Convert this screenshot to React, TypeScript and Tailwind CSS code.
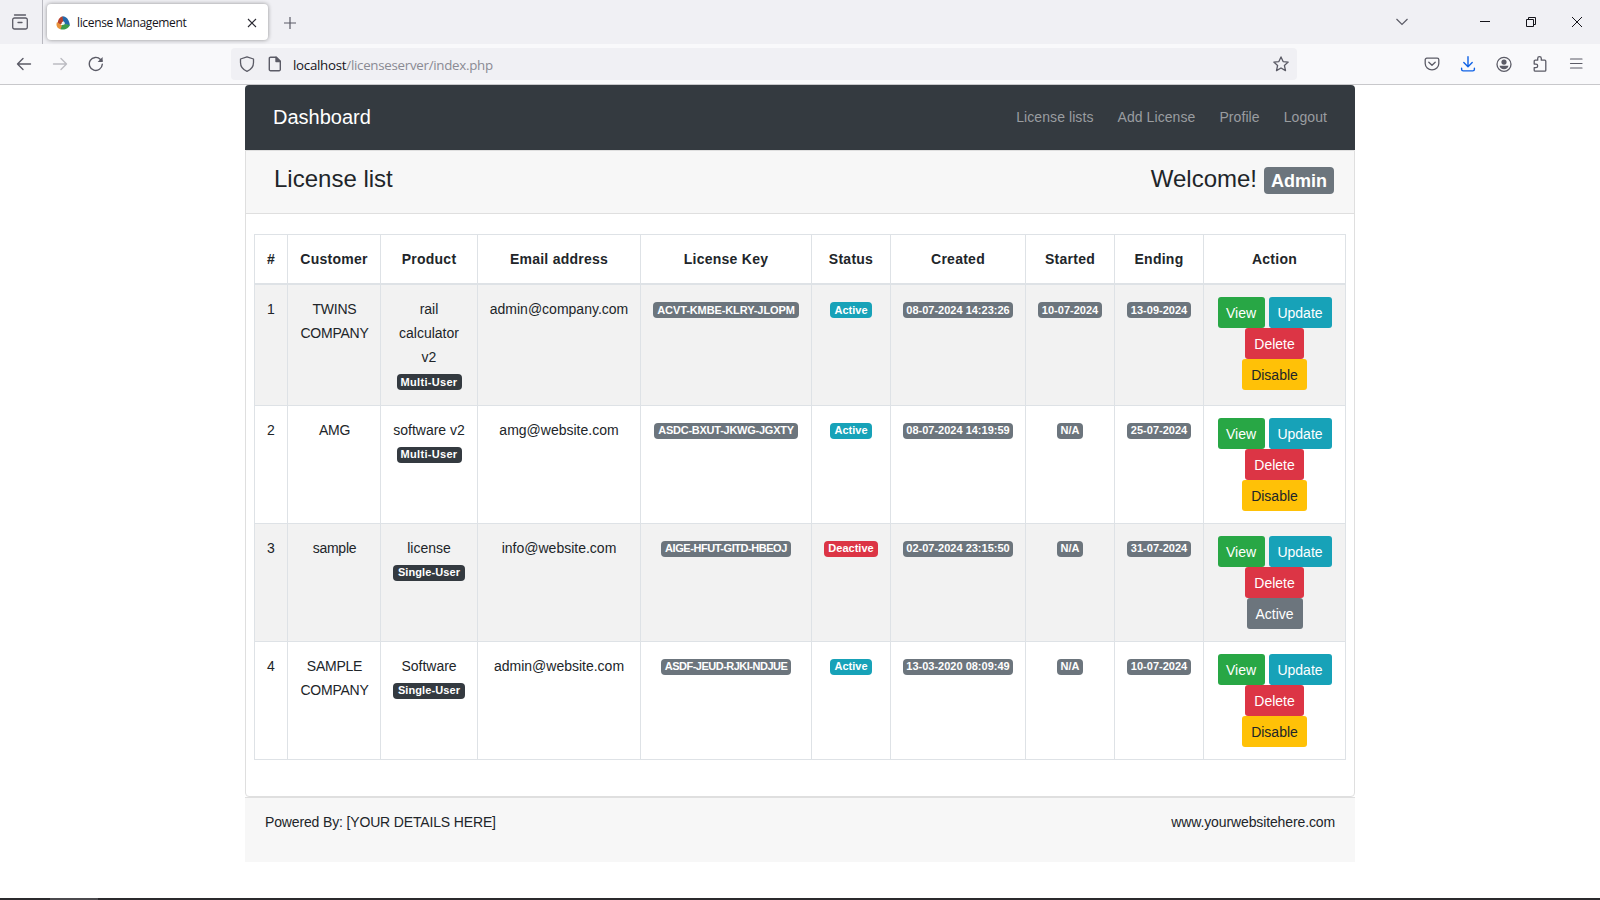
import { Fragment, type ReactNode } from "react";
import clsx from "clsx";

const licenses = [
  {
    id: 1,
    customer: ["TWINS", "COMPANY"],
    product: ["rail", "calculator", "v2"],
    type: "Multi-User",
    email: "admin@company.com",
    key: "ACVT-KMBE-KLRY-JLOPM",
    keyStyle: "w-[146px] tracking-[-0.1px]",
    status: "Active",
    created: "08-07-2024 14:23:26",
    started: "10-07-2024",
    ending: "13-09-2024",
  },
  {
    id: 2,
    customer: ["AMG"],
    product: ["software v2"],
    type: "Multi-User",
    email: "amg@website.com",
    key: "ASDC-BXUT-JKWG-JGXTY",
    keyStyle: "w-[144px] tracking-[-0.25px]",
    status: "Active",
    created: "08-07-2024 14:19:59",
    started: "N/A",
    ending: "25-07-2024",
  },
  {
    id: 3,
    customer: ["sample"],
    product: ["license"],
    type: "Single-User",
    email: "info@website.com",
    key: "AIGE-HFUT-GITD-HBEOJ",
    keyStyle: "w-[130px] tracking-[-0.45px]",
    status: "Deactive",
    created: "02-07-2024 23:15:50",
    started: "N/A",
    ending: "31-07-2024",
  },
  {
    id: 4,
    customer: ["SAMPLE", "COMPANY"],
    product: ["Software"],
    type: "Single-User",
    email: "admin@website.com",
    key: "ASDF-JEUD-RJKI-NDJUE",
    keyStyle: "w-[130px] tracking-[-0.5px]",
    status: "Active",
    created: "13-03-2020 08:09:49",
    started: "N/A",
    ending: "10-07-2024",
  },
];

const columns = [
  { title: "#", width: "w-[33px]" },
  { title: "Customer", width: "w-[93px]" },
  { title: "Product", width: "w-[97px]" },
  { title: "Email address", width: "w-[163px]" },
  { title: "License Key", width: "w-[171px]" },
  { title: "Status", width: "w-[79px]" },
  { title: "Created", width: "w-[135px]" },
  { title: "Started", width: "w-[89px]" },
  { title: "Ending", width: "w-[89px]" },
  { title: "Action", width: "w-[142px]" },
];

function Badge({ className, children }: { className: string; children: ReactNode }) {
  return (
    <span
      className={clsx(
        "inline-flex h-4 items-center justify-center whitespace-nowrap rounded text-[11px] font-bold leading-none text-white",
        className
      )}
    >
      {children}
    </span>
  );
}

function Button({ className, children }: { className: string; children: ReactNode }) {
  return (
    <button className={clsx("h-[31px] rounded-[3px] pt-0.5 text-center text-sm leading-[29px]", className)}>
      {children}
    </button>
  );
}

function Lines({ items }: { items: string[] }) {
  return (
    <>
      {items.map((line) => (
        <Fragment key={line}>
          {line}
          <br />
        </Fragment>
      ))}
    </>
  );
}

function Browser() {
  return (
    <header className="font-['Open_Sans','Noto_Sans',sans-serif] text-[#15141a]">
      <div className="flex h-11 items-center bg-[#f0f0f4]">
        <div className="flex h-11 w-[43px] items-center justify-center border-r border-[#b9b9c0] pr-0.5">
          <svg className="size-4" viewBox="0 0 16 16" fill="none" stroke="#5b5b66" strokeWidth="1.3" strokeLinecap="round">
            <path d="M2.5 1h11M2.500 4h11a1.800 1.800 0 0 1 1.800 1.800v7.400a1.800 1.800 0 0 1-1.800 1.800h-11a1.800 1.800 0 0 1-1.800-1.800V5.800a1.800 1.800 0 0 1 1.800-1.800zM6 8.500h4" />
          </svg>
        </div>
        <div className="ml-1 flex h-9 w-[221px] items-center rounded bg-white pt-px pr-[11px] pl-[9px] shadow-[0_0_4px_rgba(0,0,0,0.4)]">
          <svg className="size-3.5 shrink-0" viewBox="0 0 14 14">
            <path d="M7 6.500 2.500 10C1 8 1.500 2 6.500.3L8 4z" fill="#b8402c" />
            <path d="M6.500.3C10 0 13.500 4 13.800 9.500L9 8.500 7 4.500z" fill="#2369ab" />
            <path d="M13.800 9C13 12.500 8 14.500 4 13L5 9.500l4-1.500z" fill="#3d9c4c" />
            <path d="M1 6C-.3 9 .8 12.500 4.500 13.200L6 9.500z" fill="#e8923a" />
            <circle cx="7.200" cy="7" r="1.500" fill="#eef3f8" />
          </svg>
          <span className="ml-[7px] text-xs tracking-[-0.35px] whitespace-nowrap">license Management</span>
          <svg className="ml-auto size-2.5" viewBox="0 0 10 10" stroke="#2b2a33" strokeWidth="1.1">
            <path d="M1 1l8 8M9 1L1 9" />
          </svg>
        </div>
        <svg className="mt-px ml-4 size-3" viewBox="0 0 12 12" stroke="#5b5b66" strokeWidth="1.200">
          <path d="M6 0v12M0 6h12" />
        </svg>
        <div className="ml-auto flex items-center pr-[18px]">
          <svg className="mr-[72px] h-3 w-3" viewBox="0 0 12 12" fill="none" stroke="#5b5b66" strokeWidth="1.200">
            <path d="M.5 3 6 8.500 11.500 3" />
          </svg>
          <svg className="mr-9 h-2.5 w-2.5" viewBox="0 0 10 10" stroke="#15141a">
            <path d="M0 4.500h10" />
          </svg>
          <svg className="mr-9 h-2.5 w-2.5" viewBox="0 0 10 10" fill="none" stroke="#15141a">
            <path d="M.5 2.500h7v7h-7zM2.500 2.500v-2h7v7h-2" />
          </svg>
          <svg className="h-2.5 w-2.5" viewBox="0 0 10 10" stroke="#15141a">
            <path d="M0 0l10 10M10 0L0 10" />
          </svg>
        </div>
      </div>

      <div className="flex h-[41px] items-start border-b border-[#c8c8cb] bg-[#f9f9fb] pt-1">
        <div className="flex h-8 w-[231px] shrink-0 items-center pl-4">
          <svg className="size-4" viewBox="0 0 16 16" fill="none" stroke="#5b5b66" strokeWidth="1.400" strokeLinecap="round" strokeLinejoin="round">
            <path d="M14.500 8H1.500M7 2.500 1.500 8 7 13.500" />
          </svg>
          <svg className="ml-5 size-4" viewBox="0 0 16 16" fill="none" stroke="#bcbcc2" strokeWidth="1.400" strokeLinecap="round" strokeLinejoin="round">
            <path d="M1.500 8h13M9 2.500 14.500 8 9 13.500" />
          </svg>
          <svg className="ml-5 size-4" viewBox="0 0 16 16" fill="none" stroke="#5b5b66" strokeWidth="1.400" strokeLinecap="round">
            <path d="M14.300 8.300A6.500 6.500 0 1 1 12.500 3.400L14 5" />
            <path d="M14.600 1v5H9.600z" fill="#5b5b66" stroke="none" />
          </svg>
        </div>
        <div className="flex h-8 w-[1066px] shrink-0 items-center rounded bg-[#f0f0f4] px-2">
          <svg className="size-4" viewBox="0 0 16 16" fill="none" stroke="#5b5b66" strokeWidth="1.300" strokeLinejoin="round">
            <path d="M8 .8 14.500 3v3.500c0 4-2.500 7.200-6.500 8.800C4 13.700 1.500 10.500 1.500 6.500V3z" />
          </svg>
          <svg className="ml-3 size-4" viewBox="0 0 16 16" fill="none" stroke="#5b5b66" strokeWidth="1.400" strokeLinejoin="round">
            <path d="M3.500 1.200h5.800l4 4v8.300a1.200 1.200 0 0 1-1.200 1.200H3.500a1.200 1.200 0 0 1-1.200-1.200V2.400a1.200 1.200 0 0 1 1.200-1.200z" />
            <path d="M9 1.200v4.300h4.300z" fill="#5b5b66" />
          </svg>
          <span className="ml-2.5 pt-[3px] text-[13.300px] tracking-[-0.27px] text-[#8a8a93]">
            <span className="text-[#15141a]">localhost</span>/licenseserver/index.php
          </span>
          <svg className="ml-auto size-4" viewBox="0 0 16 16" fill="none" stroke="#5b5b66" strokeWidth="1.300" strokeLinejoin="round">
            <path d="m8 .9 2.100 4.700 5.100.5-3.800 3.400 1.100 5.100L8 12l-4.500 2.600 1.100-5.100L.8 6.100l5.100-.5z" />
          </svg>
        </div>
        <div className="ml-auto flex h-8 items-center gap-5 pr-4">
          <svg className="size-4" viewBox="0 0 16 16" fill="none" stroke="#5b5b66" strokeWidth="1.300" strokeLinecap="round" strokeLinejoin="round">
            <path d="M2.800 2.200h10.400a1.600 1.600 0 0 1 1.600 1.600V7.500a6.800 6.300 0 0 1-13.600 0V3.800a1.600 1.600 0 0 1 1.600-1.600zM4.800 6.200 8 9.300l3.200-3.100" />
          </svg>
          <svg className="size-4" viewBox="0 0 16 16" fill="none" stroke="#0f62e6" strokeWidth="1.400" strokeLinecap="round" strokeLinejoin="round">
            <path d="M8 .8v9.700M3.800 6.500 8 10.700l4.200-4.200M1.600 12.300v1a1.600 1.600 0 0 0 1.600 1.600h9.600a1.600 1.600 0 0 0 1.600-1.600v-1" />
          </svg>
          <svg className="size-4" viewBox="0 0 16 16" fill="#5b5b66">
            <circle cx="8" cy="8.300" r="7" fill="none" stroke="#5b5b66" strokeWidth="1.300" />
            <circle cx="8" cy="6.100" r="2.600" />
            <path d="M3.500 9.800h9a4.600 4.300 0 0 1-9 0z" />
          </svg>
          <svg className="size-4" viewBox="0 0 16 16" fill="none" stroke="#5b5b66" strokeWidth="1.300" strokeLinejoin="round">
            <path d="M2.200 5.200a1 1 0 0 1 1-1h2.500V2.500a1.800 1.800 0 0 1 3.600 0v1.700h3.500a1 1 0 0 1 1 1v9a1 1 0 0 1-1 1H3.200a1 1 0 0 1-1-1v-2.500h1.700a1.800 1.800 0 0 0 0-3.600H2.200z" />
          </svg>
          <svg className="size-4" viewBox="0 0 16 16" stroke="#5b5b66" strokeWidth="1.200" strokeLinecap="round">
            <path d="M2.500 3h11.500M2.500 7.500h11.500M2.500 12h11.500" />
          </svg>
        </div>
      </div>
    </header>
  );
}

function LicenseTable() {
  return (
    <table className="w-[1092px] table-fixed border-collapse text-center text-sm leading-6">
      <colgroup>
        {columns.map((c) => (
          <col key={c.title} className={c.width} />
        ))}
      </colgroup>
      <thead>
        <tr className="h-[49px]">
          {columns.map((c) => (
            <th key={c.title} className="border border-b-2 border-[#dee2e6] font-bold tracking-[0.25px]">
              {c.title}
            </th>
          ))}
        </tr>
      </thead>
      <tbody>
        {licenses.map((l, i) => (
          <tr
            key={l.id}
            className={clsx(
              "align-top *:border *:border-[#dee2e6] *:pt-3",
              i === 0 ? "h-[122px]" : "h-[118px] [&_span]:align-[1px]",
              i % 2 === 0 && "bg-[#f2f2f2]"
            )}
          >
            <td>{l.id}</td>
            <td className="pl-px tracking-[-0.25px]">
              <Lines items={l.customer} />
            </td>
            <td>
              <Lines items={l.product} />
              <Badge
                className={clsx(
                  "bg-[#343a40]",
                  l.type === "Multi-User" ? "w-[65px] tracking-[0.3px]" : "w-[72px] tracking-[0.1px]"
                )}
              >
                {l.type}
              </Badge>
            </td>
            <td>{l.email}</td>
            <td>
              <Badge className={clsx("bg-[#6c757d]", l.keyStyle)}>{l.key}</Badge>
            </td>
            <td>
              <Badge className={l.status === "Active" ? "w-[42px] bg-[#17a2b8]" : "w-[54px] bg-[#dc3545]"}>{l.status}</Badge>
            </td>
            <td>
              <Badge className="w-[110px] bg-[#6c757d]">{l.created}</Badge>
            </td>
            <td>
              <Badge className={clsx("bg-[#6c757d]", l.started === "N/A" ? "w-[26px]" : "w-16")}>{l.started}</Badge>
            </td>
            <td>
              <Badge className="w-16 bg-[#6c757d]">{l.ending}</Badge>
            </td>
            <td>
              <div className="flex flex-col items-center">
                <div className="flex gap-1">
                  <Button className="w-[47px] bg-[#28a745] text-white">View</Button>
                  <Button className="w-[63px] bg-[#17a2b8] text-white">Update</Button>
                </div>
                <Button className="w-[59px] bg-[#dc3545] text-white">Delete</Button>
                {l.status === "Active" ? (
                  <Button className="w-[65px] bg-[#ffc107] text-[#212529]">Disable</Button>
                ) : (
                  <Button className="w-[56px] bg-[#6c757d] text-white">Active</Button>
                )}
              </div>
            </td>
          </tr>
        ))}
      </tbody>
    </table>
  );
}

export default function App() {
  return (
    <div className="flex h-[900px] w-[1600px] flex-col overflow-hidden bg-white">
      <Browser />
      <main className="mx-auto w-[1110px] font-['Liberation_Sans',Arial,sans-serif] text-sm text-[#212529]">
        <nav className="flex h-[65px] items-center justify-between rounded-t bg-[#343a40] px-7 pb-0.5">
          <span className="text-xl text-white">Dashboard</span>
          <div className="flex gap-6 tracking-[0.08px] text-[#9a9da0]">
            <span>License lists</span>
            <span>Add License</span>
            <span>Profile</span>
            <span>Logout</span>
          </div>
        </nav>
        <section className="h-[647px] rounded-b border border-[#dfdfdf]">
          <div className="flex h-[63px] items-start justify-between border-b border-[#dfdfdf] bg-[#f7f7f7] pt-3 pr-5 pl-7 text-2xl leading-8">
            <h4>License list</h4>
            <h4 className="flex items-start gap-[7px]">
              Welcome!
              <span className="mt-1 flex h-[27px] w-[70px] items-center justify-center rounded bg-[#6c757d] text-lg font-bold text-white">
                Admin
              </span>
            </h4>
          </div>
          <div className="px-2 pt-5">
            <LicenseTable />
          </div>
        </section>
        <footer className="flex h-[65px] justify-between border-t border-[#dfdfdf] bg-[#f7f7f7] px-5 pt-3 leading-6">
          <span className="tracking-[-0.15px]">Powered By: [YOUR DETAILS HERE]</span>
          <span className="tracking-[-0.12px]">www.yourwebsitehere.com</span>
        </footer>
      </main>
      <div className="mt-auto h-0.5 bg-[#2b2a2d]">
        <div className="ml-[50px] h-0.5 w-12 bg-[#4b4a4d]" />
      </div>
    </div>
  );
}
